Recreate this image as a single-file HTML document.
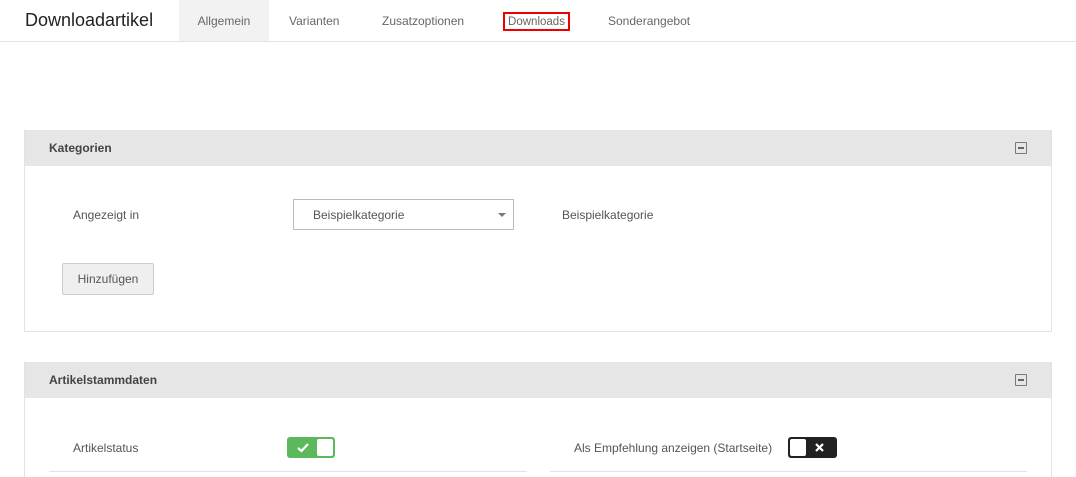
<!DOCTYPE html>
<html style="width:1076px;height:477px;overflow:hidden"><head><meta charset="utf-8"><style>
*{box-sizing:border-box;margin:0;padding:0}
body{width:1076px;height:477px;overflow:hidden;background:#fff;font-family:"Liberation Sans",sans-serif;color:#555;font-size:12px;position:relative}
.hdr{position:absolute;left:0;top:0;width:1076px;height:42px;border-bottom:1px solid #e3e3e3}
.title{position:absolute;left:25px;top:10px;font-size:18px;color:#222}
.tab{position:absolute;top:0;height:41px;line-height:42px;font-size:12px;color:#666}
.panel{position:absolute;left:24px;width:1028px;border:1px solid #e2e2e2;border-top:none}
.ph{height:36px;background:#e6e6e6;font-weight:bold;font-size:12px;color:#444;line-height:36px;padding-left:24px;position:relative}
.mi{position:absolute;right:24px;top:12px;width:12px;height:12px;border:1.5px solid #777;border-radius:1px}
.mi:after{content:"";position:absolute;left:2px;right:2px;top:4px;height:1.5px;background:#666}
.a{position:absolute}
</style></head><body>
<div class="hdr">
<div class="title">Downloadartikel</div>
<div class="tab" style="left:179px;width:90px;background:#f2f2f2;text-align:center">Allgemein</div>
<div class="tab" style="left:289px">Varianten</div>
<div class="tab" style="left:382px">Zusatzoptionen</div>
<div class="tab" style="left:503px;top:12px;height:19px;line-height:16px;width:67px;border:2px solid #e00;text-align:center;font-size:11.5px">Downloads</div>
<div class="tab" style="left:608px">Sonderangebot</div>
</div>

<div class="panel" style="top:130px;height:202px">
<div class="ph">Kategorien<div class="mi"></div></div>
<div class="a" style="left:48px;top:78px">Angezeigt in</div>
<div class="a" style="left:268px;top:69px;width:221px;height:31px;border:1px solid #bbb;padding:8px 0 0 19px">Beispielkategorie
<div class="a" style="right:7px;top:13px;border-left:4px solid transparent;border-right:4px solid transparent;border-top:4px solid #777"></div></div>
<div class="a" style="left:537px;top:78px">Beispielkategorie</div>
<div class="a" style="left:37px;top:133px;width:92px;height:32px;border:1px solid #ccc;background:#efefef;border-radius:2px;text-align:center;line-height:30px">Hinzufügen</div>
</div>

<div class="panel" style="top:362px;height:120px">
<div class="ph">Artikelstammdaten<div class="mi"></div></div>
<div class="a" style="left:48px;top:79px">Artikelstatus</div>
<div class="a" style="left:262px;top:75px;width:48px;height:21px;background:#5cb85c;border-radius:3px">
<svg class="a" style="left:10px;top:5px" width="12" height="11" viewBox="0 0 12 11"><path d="M1 6l3.5 3L11 2" stroke="#fff" stroke-width="2.2" fill="none"/></svg>
<div class="a" style="right:2px;top:2px;width:16px;height:17px;background:#fff;border-radius:2px"></div></div>
<div class="a" style="left:24px;top:109px;width:478px;height:1px;background:#e3e3e3"></div>
<div class="a" style="left:549px;top:79px">Als Empfehlung anzeigen (Startseite)</div>
<div class="a" style="left:763px;top:75px;width:49px;height:21px;background:#222;border-radius:3px">
<div class="a" style="left:2px;top:2px;width:16px;height:17px;background:#fff;border-radius:2px"></div>
<svg class="a" style="left:27px;top:6px" width="9" height="9" viewBox="0 0 9 9"><path d="M1 1l7 7M8 1l-7 7" stroke="#fff" stroke-width="2.2"/></svg></div>
<div class="a" style="left:525px;top:109px;width:477px;height:1px;background:#e3e3e3"></div>
</div>
</body></html>
